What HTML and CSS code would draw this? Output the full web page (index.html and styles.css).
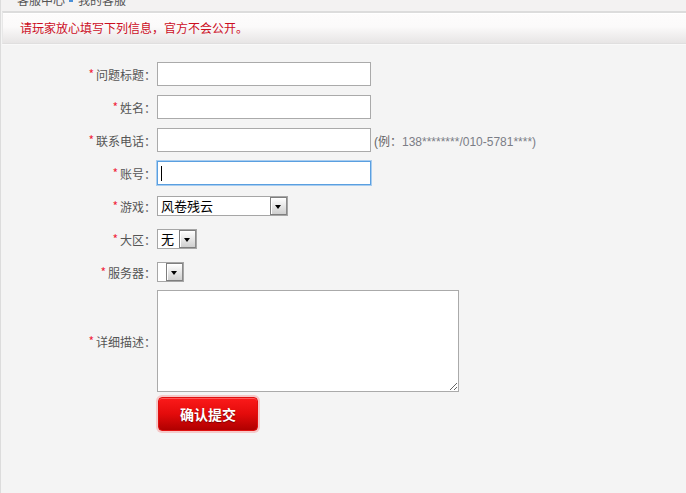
FILE: index.html
```html
<!DOCTYPE html>
<html lang="zh-CN">
<head>
<meta charset="utf-8">
<title>我的客服</title>
<link rel="stylesheet" href="styles.css">
</head>
<body>
<div class="page">
  <div class="crumb"><div class="crumb-in">客服中心<span class="sep"></span>我的客服</div></div>
  <div class="notice">请玩家放心填写下列信息，官方不会公开。</div>
  <form class="form">
    <div class="row">
      <label class="lbl"><span class="star">*</span>问题标题：</label>
      <input class="txt" type="text">
    </div>
    <div class="row">
      <label class="lbl"><span class="star">*</span>姓名：</label>
      <input class="txt" type="text">
    </div>
    <div class="row">
      <label class="lbl"><span class="star">*</span>联系电话：</label>
      <input class="txt" type="text">
      <span class="hint">(例：<span class="hint-num">138********/010-5781****)</span></span>
    </div>
    <div class="row">
      <label class="lbl"><span class="star">*</span>账号：</label>
      <span class="txt focused"><span class="caret"></span></span>
    </div>
    <div class="row">
      <label class="lbl"><span class="star">*</span>游戏：</label>
      <span class="sel sel-game"><span class="sel-val">风卷残云</span><span class="arrow"></span></span>
    </div>
    <div class="row">
      <label class="lbl"><span class="star">*</span>大区：</label>
      <span class="sel sel-zone"><span class="sel-val">无</span><span class="arrow"></span></span>
    </div>
    <div class="row row-server">
      <label class="lbl"><span class="star">*</span>服务器：</label>
      <span class="sel sel-server"><span class="sel-val"></span><span class="arrow"></span></span>
    </div>
    <div class="row row-desc">
      <label class="lbl"><span class="star">*</span>详细描述：</label>
      <textarea class="area"></textarea>
    </div>
    <div class="row row-btn">
      <span class="lbl"></span>
      <button class="btn" type="button">确认提交</button>
    </div>
  </form>
</div>
</body>
</html>
```

FILE: styles.css
```css
html, body {
  margin: 0;
  padding: 0;
  background: #f4f4f4;
}
body {
  font-family: "Noto Sans CJK SC", "Liberation Sans", sans-serif;
  font-size: 12px;
  color: #555;
}
.page {
  min-height: 493px;
  border-left: 1px solid #dcdcdc;
  box-sizing: border-box;
}
.crumb {
  height: 11px;
  overflow: hidden;
  background: #f3f2f2;
}
.crumb-in {
  margin-top: -8px;
  padding-left: 16px;
  line-height: 16px;
  color: #555;
  display: flex;
  align-items: center;
}
.sep {
  display: inline-block;
  width: 4px;
  height: 4px;
  margin: 0 5px 0 4px;
  background: #4a90d9;
}
.notice {
  margin-left: 1px;
  height: 30px;
  border-top: 2px solid #dcdcdc;
  border-left: 1px solid #e8e8e8;
  border-bottom: 1px solid #e0dfdf;
  box-shadow: inset 0 1px 0 #ffffff, 0 1px 0 #f9f9f9;
  background: linear-gradient(#fdfcfc 0%, #fbfafa 45%, #e7e5e5 100%);
  padding-left: 17px;
  line-height: 30px;
  color: #cc0e1f;
  font-size: 12px;
}
.form {
  margin: 0;
  padding-top: 18px;
  display: flex;
  flex-direction: column;
  gap: 9px;
}
.row {
  display: flex;
  align-items: center;
  height: 24px;
}
.row-server {
  margin-bottom: -3px;
}
.row-desc {
  height: 102px;
  margin-bottom: -4px;
}
.row-btn {
  height: 34px;
}
.lbl {
  width: 156px;
  flex: none;
  text-align: right;
  color: #555;
  font-size: 12px;
  padding-right: 1px;
  box-sizing: border-box;
}
.star {
  color: #f0243c;
  margin-right: 2px;
  position: relative;
  top: -1px;
}
.txt {
  width: 214px;
  height: 24px;
  box-sizing: border-box;
  border: 1px solid #aaaaaa;
  background: #fff;
  padding: 0 4px;
  margin: 0;
  outline: none;
  font: inherit;
  display: block;
}
.focused {
  border-color: #5a9fe0;
  box-shadow: 0 0 0 1px #a9cdef;
  display: flex;
  align-items: center;
  padding-left: 3px;
}
.caret {
  width: 1px;
  height: 15px;
  background: #000;
}
.hint {
  margin-left: 3px;
  color: #666;
  font-family: "Liberation Sans", "Noto Sans CJK SC", sans-serif;
  font-size: 12px;
}
.hint-num {
  color: #7b7d86;
}
.sel {
  display: flex;
  height: 20px;
  box-sizing: border-box;
  border: 1px solid #a6a6a6;
  background: #fff;
}
.sel-val {
  flex: 1;
  color: #000;
  font-size: 13px;
  line-height: 18px;
  padding-left: 3px;
  white-space: nowrap;
  overflow: hidden;
}
.sel-game { width: 131px; }
.sel-zone { width: 40px; }
.sel-server { width: 27px; }
.sel-server .sel-val { padding-left: 0; }
.arrow {
  width: 17px;
  flex: none;
  box-sizing: border-box;
  border: 1px solid #7e7e7e;
  border-right-color: #8a8a8a;
  background: linear-gradient(#ffffff, #cfcfcf);
  box-shadow: inset 1px 1px 0 #fff;
  position: relative;
}
.arrow::after {
  content: "";
  position: absolute;
  left: 4px;
  top: 7px;
  border-left: 3.5px solid transparent;
  border-right: 3.5px solid transparent;
  border-top: 4px solid #000;
}
.area {
  width: 302px;
  height: 102px;
  box-sizing: border-box;
  border: 1px solid #aaaaaa;
  background: #fff;
  margin: 0;
  padding: 2px;
  font: inherit;
  display: block;
}
.btn {
  margin-left: 1px;
  width: 100px;
  height: 34px;
  box-sizing: border-box;
  border: 1px solid #e01010;
  border-radius: 4px;
  background: linear-gradient(#fb1a1a 0%, #e30b0b 50%, #b00000 100%);
  box-shadow: 0 0 0 2px #f5c9c9, inset 0 1px 0 #ff5a5a;
  color: #fff;
  font-family: "Noto Sans CJK SC", sans-serif;
  font-size: 14px;
  font-weight: bold;
  text-shadow: 0 1px 1px #7a0000;
  padding: 0;
  cursor: pointer;
}
```
